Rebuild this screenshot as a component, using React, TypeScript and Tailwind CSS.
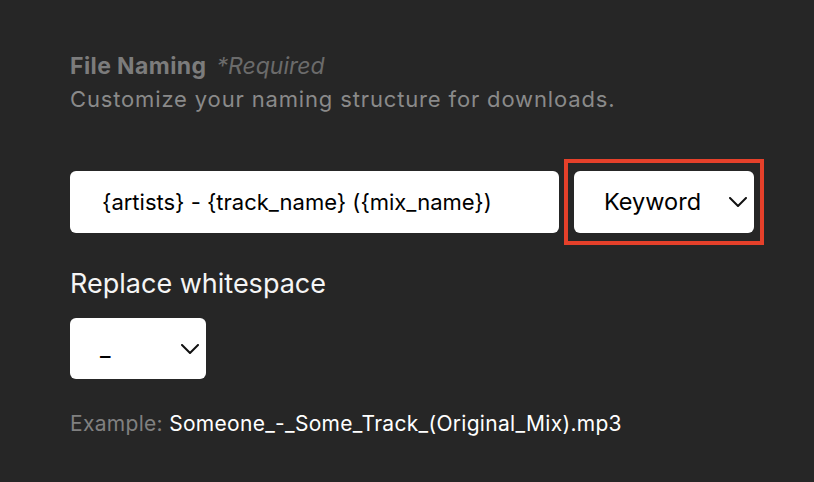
const FONT = { fontFamily: 'Inter, "Noto Sans", sans-serif' }

function Chevron() {
  return (
    <svg width="18" height="10" viewBox="0 0 18 10" fill="none" className="shrink-0">
      <polyline points="1,1 9,9 17,1" stroke="#111" strokeWidth="2" strokeLinecap="round" strokeLinejoin="round" />
    </svg>
  )
}

function SelectBox({ value, className }: { value: string; className: string }) {
  return (
    <div
      className={`flex items-center justify-between rounded-[6px] bg-white pl-[30px] pr-[7px] text-black ${className}`}
    >
      <span>{value}</span>
      <Chevron />
    </div>
  )
}

export default function App() {
  return (
    <div className="min-h-[482px] w-full bg-[#262626] pl-[70px] pt-[51px]" style={FONT}>
      <div className="flex items-baseline gap-[10px] text-[23px] leading-[30px]">
        <span className="font-bold tracking-[0.4px] text-[#7c7c7c]">File Naming</span>
        <span className="italic text-[#6b6b6b]">*Required</span>
      </div>
      <p className="mt-[4px] text-[22px] leading-[28px] tracking-[0.85px] text-[#8a8a8a]">
        Customize your naming structure for downloads.
      </p>

      <div className="mt-[46px] flex items-center gap-[5px]">
        <div className="flex h-[62px] w-[489px] items-center rounded-[6px] bg-white pl-[32px] text-[22px] text-black">
          {'{artists} - {track_name} ({mix_name})'}
        </div>
        <div className="border-4 border-[#e5402a] px-[6px] py-[8px]">
          <SelectBox value="Keyword" className="h-[62px] w-[180px] text-[23.5px]" />
        </div>
      </div>

      <h2 className="mt-[22px] text-[27px] leading-[34px] text-[#f5f5f5]">Replace whitespace</h2>

      <SelectBox value="_" className="mt-[17px] h-[61px] w-[136px] text-[23px]" />

      <p className="mt-[32px] text-[21px] leading-[26px] tracking-[0.3px]">
        <span className="text-[#808080]">Example: </span>
        <span className="text-white">Someone_-_Some_Track_(Original_Mix).mp3</span>
      </p>
    </div>
  )
}
